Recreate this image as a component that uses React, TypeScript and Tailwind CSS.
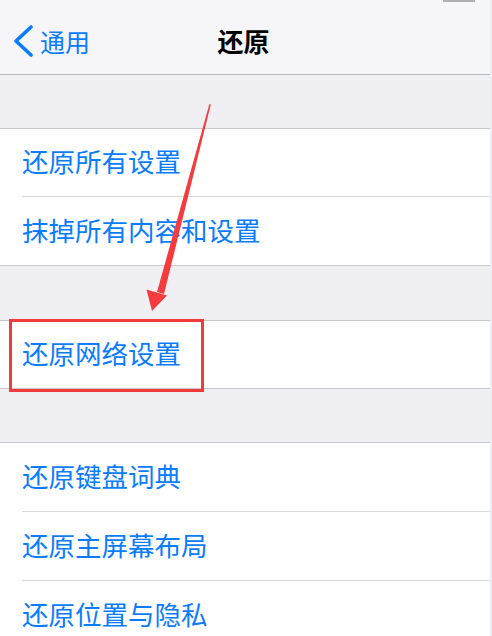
import React from "react";

const font = { fontFamily: '"Noto Sans CJK SC", "Noto Sans", sans-serif' };

type Row = { label: string; h: string };

function Group({ rows }: { rows: Row[] }) {
  return (
    <div className="bg-white border-y border-[#c8c7cc]">
      {rows.map((r, i) => (
        <div key={r.label}>
          {i > 0 && <div className="ml-[22px] border-t border-[#d9d9dd]" />}
          <div className={`flex items-center pl-[22px] ${r.h}`}>
            <span className="text-[26.5px] leading-none text-[#0a7cff] -mt-[2px]">{r.label}</span>
          </div>
        </div>
      ))}
    </div>
  );
}

export default function App() {
  return (
    <div className="relative w-[492px] h-[636px] overflow-hidden bg-[#efeff4] flex" style={font}>
      <div className="w-[490px] flex flex-col">
        <div className="relative h-[75px] bg-[#f6f6f8] border-b border-[#b8b8bc] flex items-center pt-[8px] shrink-0">
          <div className="flex items-center pl-[13px] gap-[7px]">
            <svg width="20" height="32" viewBox="0 0 20 32">
              <path d="M18 2 L3 16 L18 30" fill="none" stroke="#0a7cff" strokeWidth="3.6" strokeLinecap="round" strokeLinejoin="round" />
            </svg>
            <span className="text-[25px] leading-none text-[#0a7cff]">通用</span>
          </div>
          <div className="absolute inset-x-0 top-[8px] bottom-0 flex items-center justify-center pointer-events-none">
            <span className="text-[26px] leading-none font-bold text-black -ml-[3px]">还原</span>
          </div>
          <div className="absolute top-0 left-[443px] w-[32px] h-[2px] bg-[#b0b0b4]" />
        </div>
        <div className="h-[53px] shrink-0" />
        <Group rows={[{ label: "还原所有设置", h: "h-[67px]" }, { label: "抹掉所有内容和设置", h: "h-[68px]" }]} />
        <div className="h-[54px] shrink-0" />
        <Group rows={[{ label: "还原网络设置", h: "h-[67px]" }]} />
        <div className="h-[53px] shrink-0" />
        <Group
          rows={[
            { label: "还原键盘词典", h: "h-[68px]" },
            { label: "还原主屏幕布局", h: "h-[68px]" },
            { label: "还原位置与隐私", h: "h-[68px]" },
          ]}
        />
      </div>
      <div className="w-[2px] bg-[#eceef3]" />

      <div className="absolute left-[9px] top-[319px] w-[195px] h-[73px] border-[3px] border-[#f03a3c]" />
      <svg className="absolute inset-0 pointer-events-none" width="492" height="636" viewBox="0 0 492 636">
        <polygon points="209.4,104 210.8,104.4 164,294 157,292" fill="#f43b3e" />
        <polygon points="152,311 146.5,289.5 167,295.5" fill="#f43b3e" />
      </svg>
    </div>
  );
}
